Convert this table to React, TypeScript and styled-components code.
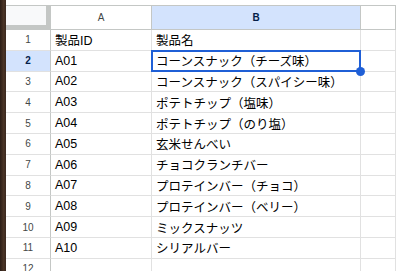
import * as React from 'react';
import styled, { createGlobalStyle, css } from 'styled-components';

const GlobalStyle = createGlobalStyle`
  html, body {
    margin: 0;
    padding: 0;
    background: #fff;
    overflow: hidden;
  }
`

const Frame = styled.div`
  display: flex;
  width: 396px;
  height: 271px;
  overflow: hidden;
  font-family: "Liberation Sans", Arial, "Noto Sans CJK JP", sans-serif;
`
const Edge = styled.div`
  width: 6px;
  flex-shrink: 0;
  background: linear-gradient(90deg, #2b1d16, #4a3426 60%, #3a281e);
`
const Sheet = styled.div`
  flex: 1;
  display: flex;
  flex-direction: column;
`
const TopGap = styled.div`
  height: 5px;
  flex-shrink: 0;
  border-bottom: 1px solid #c4c7c5;
`
const Row = styled.div<{ $head?: boolean }>`
  display: grid;
  grid-template-columns: 45px 101px 209px 1fr;
  height: ${p => (p.$head ? '24px' : '20.8px')};
  flex-shrink: 0;
`
const Corner = styled.div`
  box-sizing: border-box;
  background: #f8f9fa;
  border-right: 5px solid #c4c7c5;
  border-bottom: 5px solid #c4c7c5;
`
const headText = css`
  display: flex;
  align-items: center;
  justify-content: center;
  box-sizing: border-box;
  font-size: 10px;
`
const ColHead = styled.div<{ $active?: boolean }>`
  ${headText}
  border-right: 1px solid #c4c7c5;
  border-bottom: 1px solid #c4c7c5;
  background: ${p => (p.$active ? '#d3e3fd' : '#fff')};
  color: ${p => (p.$active ? '#041e49' : '#444746')};
  font-weight: ${p => (p.$active ? 700 : 400)};
`
const RowHead = styled.div<{ $active?: boolean }>`
  ${headText}
  border-right: 1px solid #c4c7c5;
  border-bottom: 1px solid #e1e1e1;
  background: ${p => (p.$active ? '#d3e3fd' : '#fff')};
  color: ${p => (p.$active ? '#041e49' : '#444746')};
  font-weight: ${p => (p.$active ? 700 : 400)};
`
const Cell = styled.div<{ $selected?: boolean }>`
  position: relative;
  display: flex;
  align-items: center;
  box-sizing: border-box;
  padding: 0 4px;
  font-size: 12.5px;
  color: #000;
  white-space: nowrap;
  border-right: 1px solid #e1e1e1;
  border-bottom: 1px solid #e1e1e1;
  ${p => p.$selected && css`
    &::before {
      content: '';
      position: absolute;
      left: -1px;
      top: -1px;
      right: -1px;
      bottom: -1px;
      border: 2px solid #1f5fd6;
      pointer-events: none;
    }
    &::after {
      content: '';
      position: absolute;
      right: -5px;
      bottom: -5px;
      width: 9px;
      height: 9px;
      border-radius: 50%;
      background: #1f5fd6;
      z-index: 2;
    }
  `}
`

const products: [string, string][] = [
  ['製品ID', '製品名'],
  ['A01', 'コーンスナック（チーズ味）'],
  ['A02', 'コーンスナック（スパイシー味）'],
  ['A03', 'ポテトチップ（塩味）'],
  ['A04', 'ポテトチップ（のり塩）'],
  ['A05', '玄米せんべい'],
  ['A06', 'チョコクランチバー'],
  ['A07', 'プロテインバー（チョコ）'],
  ['A08', 'プロテインバー（ベリー）'],
  ['A09', 'ミックスナッツ'],
  ['A10', 'シリアルバー'],
  ['', ''],
]

export default function App() {
  return (
    <Frame>
      <GlobalStyle />
      <Edge />
      <Sheet>
        <TopGap />
        <Row $head>
          <Corner />
          <ColHead>A</ColHead>
          <ColHead $active>B</ColHead>
          <ColHead />
        </Row>
        {products.map(([id, name], i) => (
          <Row key={i}>
            <RowHead $active={i === 1}>{i + 1}</RowHead>
            <Cell>{id}</Cell>
            <Cell $selected={i === 1}>{name}</Cell>
            <Cell />
          </Row>
        ))}
      </Sheet>
    </Frame>
  )
}
